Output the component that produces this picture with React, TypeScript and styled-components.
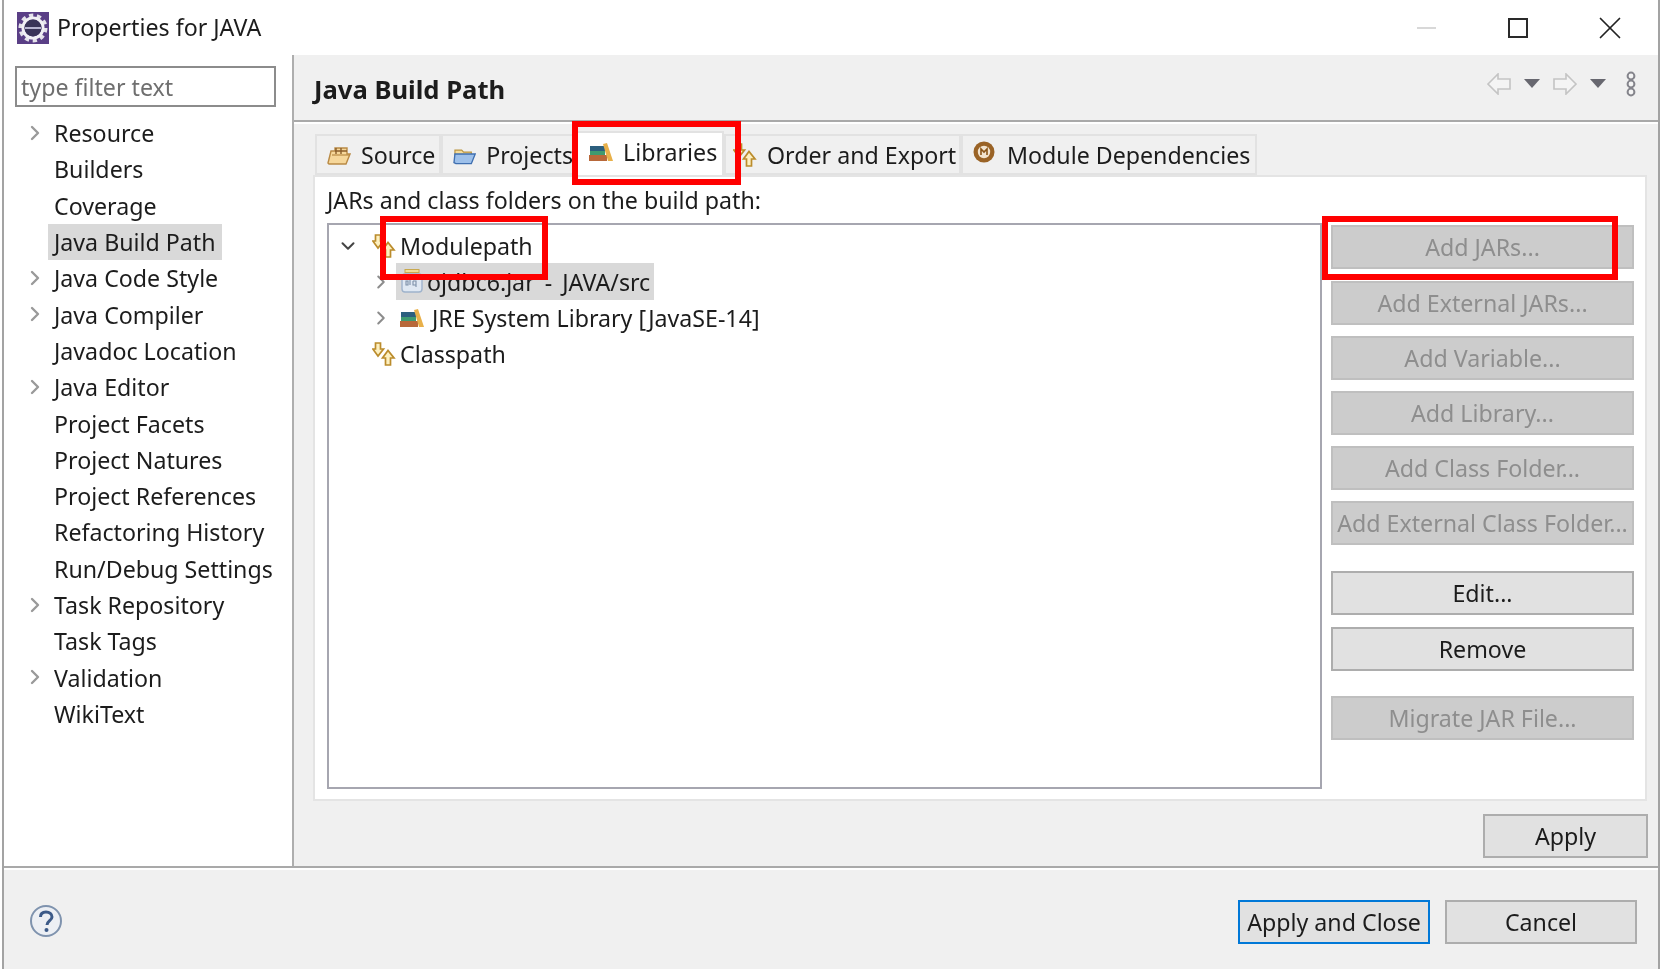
import React from 'react';
import styled, { createGlobalStyle } from 'styled-components';
import { ChevronRight, ChevronDown, X } from 'lucide-react';

const GlobalStyle = createGlobalStyle`
  html, body { margin: 0; padding: 0; background: #fff; }
  body { font-family: "Noto Sans", "Open Sans", sans-serif; color: #1c1c1c; }
  * { box-sizing: border-box; }
`;

const Page = styled.div`
  position: relative;
  width: 1664px;
  height: 969px;
  padding: 0 4px 0 2px;
  overflow: hidden;
  font-size: 23.2px;
`;

const Window = styled.div`
  width: 100%;
  height: 100%;
  display: flex;
  flex-direction: column;
  border-left: 2px solid #a3a3a3;
  border-right: 2px solid #a3a3a3;
  background: #fff;
  filter: blur(0.4px);
`;

const TitleBar = styled.div`
  height: 55px;
  flex: none;
  display: flex;
  align-items: center;
  padding: 0 6px 0 13px;
  gap: 8px;
`;

const TitleText = styled.span`
  flex: 1;
  line-height: 1;
`;

const WinButton = styled.div`
  width: 84px;
  display: flex;
  justify-content: center;
  align-items: center;
`;

const Minimize = styled.div`
  width: 19px;
  height: 2px;
  background: #d8d8d8;
`;

const Maximize = styled.div`
  width: 20px;
  height: 20px;
  border: 2px solid #2a2a2a;
`;

const Body = styled.div`
  height: 813px;
  flex: none;
  display: flex;
  border-bottom: 2px solid #a9a9a9;
`;

const Sidebar = styled.aside`
  width: 290px;
  flex: none;
  padding: 11px 0 0 11px;
  border-right: 2px solid #aeaeae;
`;

const Filter = styled.div`
  width: 261px;
  height: 41px;
  border: 2px solid #8c8c8c;
  padding-left: 4px;
  display: flex;
  align-items: center;
  color: #6f6f6f;
  margin-bottom: 8px;
`;

const NavRow = styled.div`
  height: 36.3px;
  display: flex;
  align-items: center;
  position: relative;
  padding-left: 39px;
  white-space: nowrap;
`;

const NavChevron = styled(ChevronRight)`
  position: absolute;
  left: 8px;
  top: 6px;
  color: #9a9a9a;
`;

const NavLabel = styled.span<{ $selected?: boolean }>`
  display: flex;
  align-items: center;
  height: 36px;
  margin-left: -6px;
  padding: 0 6px;
  background: ${p => (p.$selected ? '#d9d9d9' : 'transparent')};
`;

const Main = styled.main`
  flex: 1;
  min-width: 0;
  background: #f0f0f0;
  display: flex;
  flex-direction: column;
`;

const Header = styled.div`
  height: 67px;
  flex: none;
  display: flex;
  align-items: center;
  justify-content: space-between;
  padding: 4px 22px 0 20px;
  border-bottom: 2px solid #a9a9a9;
  box-shadow: 0 2px 0 #fff;
`;

const HeaderTitle = styled.h1`
  margin: 0;
  font-size: 25.6px;
  font-weight: 700;
`;

const NavTools = styled.div`
  display: flex;
  align-items: center;
  gap: 13px;
  margin-top: -12px;
`;

const MenuSlot = styled.div`
  display: flex;
  margin-left: 7px;
`;

const TabStrip = styled.div`
  margin: 12px 0 0 21px;
  height: 41px;
  flex: none;
  display: flex;
  align-items: flex-start;
`;

const Tab = styled.div<{ $w: number; $active?: boolean; $pad?: number }>`
  width: ${p => p.$w}px;
  height: ${p => (p.$active ? '44px' : '41px')};
  margin-top: ${p => (p.$active ? '-3px' : '0')};
  padding-bottom: ${p => (p.$active ? '4px' : '0')};
  position: relative;
  z-index: ${p => (p.$active ? 1 : 0)};
  display: flex;
  align-items: center;
  gap: 10px;
  padding-left: ${p => p.$pad ?? 10}px;
  background: ${p => (p.$active ? '#fff' : '#f0f0f0')};
  border: 2px solid #e2e2e2;
  border-bottom: ${p => (p.$active ? 'none' : '2px solid #e2e2e2')};
  white-space: nowrap;
`;

const Panel = styled.div`
  margin: 0 11px 0 19px;
  height: 626px;
  flex: none;
  background: #fff;
  border: 2px solid #e4e4e4;
  padding: 9px 12px 10px 12px;
  display: flex;
  flex-direction: column;
`;

const PanelLabel = styled.div`
  height: 37.4px;
  padding-bottom: 10px;
  display: flex;
  align-items: center;
  flex: none;
`;

const PanelColumns = styled.div`
  flex: 1;
  display: flex;
  gap: 9px;
  min-height: 0;
`;

const Tree = styled.div`
  width: 995px;
  height: 566px;
  flex: none;
  border: 2px solid #a6a6b0;
  padding-top: 2px;
`;

const TreeRow = styled.div<{ $depth: number }>`
  height: 36.3px;
  display: flex;
  align-items: center;
  padding-left: ${p => 7 + p.$depth * 33}px;
  white-space: nowrap;
`;

const Twist = styled.span`
  width: 24px;
  height: 24px;
  flex: none;
  display: flex;
  align-items: center;
  justify-content: center;
  color: #8c8c8c;
`;

const TwistOpen = styled(Twist)`
  color: #444;
`;

const TreeIcon = styled.span<{ $ml: number }>`
  width: 24px;
  height: 24px;
  flex: none;
  display: flex;
  align-items: center;
  margin-left: ${p => p.$ml}px;
`;

const TreeText = styled.span<{ $ml: number }>`
  margin-left: ${p => p.$ml}px;
  line-height: 36px;
`;

const JarText = styled(TreeText)`
  word-spacing: 4px;
`;

const SelectedBand = styled.span`
  display: flex;
  align-items: center;
  height: 37px;
  margin-left: 3px;
  padding-right: 4px;
  background: #d9d9d9;
`;

const ButtonColumn = styled.div`
  width: 303px;
  flex: none;
  display: flex;
  flex-direction: column;
  margin-top: 2px;
`;

const PushButton = styled.div<{ $disabled?: boolean; $top?: number; $focused?: boolean }>`
  height: 44px;
  flex: none;
  margin-top: ${p => p.$top ?? 11.2}px;
  display: flex;
  align-items: center;
  justify-content: center;
  background: ${p => (p.$disabled ? '#cccccc' : '#e1e1e1')};
  color: ${p => (p.$disabled ? '#8e8e8e' : '#1c1c1c')};
  border: 2px solid ${p => (p.$focused ? '#0078d7' : p.$disabled ? '#bfbfbf' : '#adadad')};
  white-space: nowrap;
`;

const ApplyRow = styled.div`
  display: flex;
  justify-content: flex-end;
  padding: 13px 10px 0 0;
`;

const SizedButton = styled(PushButton)<{ $w: number }>`
  width: ${p => p.$w}px;
  margin-top: 0;
`;

const Footer = styled.div`
  flex: 1;
  background: #f0f0f0;
  display: flex;
  align-items: center;
  justify-content: space-between;
  padding: 0 21px 0 25px;
  box-shadow: inset 0 2px 0 #fff;
`;

const HelpSlot = styled.div`
  display: flex;
  margin-top: 4px;
`;

const FooterButtons = styled.div`
  display: flex;
  gap: 15px;
  margin-top: 6px;
`;

const RedFrame = styled.div<{ $x: number; $y: number; $w: number; $h: number }>`
  position: absolute;
  left: ${p => p.$x}px;
  top: ${p => p.$y}px;
  width: ${p => p.$w}px;
  height: ${p => p.$h}px;
  border: 6px solid #ff0000;
  z-index: 5;
`;

const AppIcon = () => (
  <svg width="32" height="32" viewBox="0 0 32 32">
    <rect width="32" height="32" fill="#5a3f86" />
    <circle cx="16" cy="16" r="12.5" fill="none" stroke="#e4e2ea" strokeWidth="4" strokeDasharray="4.2 3.6" />
    <circle cx="16" cy="16" r="10" fill="none" stroke="#f1f0f4" strokeWidth="3" />
    <circle cx="16" cy="16" r="8.5" fill="#3a3458" />
    <rect x="8" y="15" width="16" height="2" fill="#b7b3d0" />
  </svg>
);

const LibraryIcon = () => (
  <svg width="24" height="20" viewBox="0 0 24 20">
    <rect x="1" y="4" width="15" height="5" fill="#2c5f7e" />
    <rect x="1" y="9" width="15" height="4" fill="#3f9a70" />
    <rect x="0" y="13" width="18" height="6" fill="#b8683a" />
    <path d="M14 2 L18 1 L24 19 L19 19 Z" fill="#e8b04a" />
  </svg>
);

const SourceIcon = () => (
  <svg width="24" height="24" viewBox="0 0 24 24">
    <path d="M1 20 L4 8 L8 8 L8 5 L20 5 L20 11 L23 11 L19 21 L2 21 Z" fill="#f6d79a" stroke="#b98a45" strokeWidth="1.4" />
    <path d="M9 5 V11 M14 5 V11 M8 8 H20" stroke="#8a5e2a" strokeWidth="1.4" />
    <path d="M5 12 H22" stroke="#b98a45" strokeWidth="1.2" />
  </svg>
);

const FolderIcon = () => (
  <svg width="24" height="24" viewBox="0 0 24 24">
    <path d="M2 7 L9 7 L11 9 L19 9 L19 12 L2 12 Z" fill="#f5dc9a" stroke="#b9933f" strokeWidth="1.2" />
    <path d="M1 20 L2 11 L23 11 L19 21 L3 21 Z" fill="#9dc0ea" stroke="#3f6fb0" strokeWidth="1.4" />
  </svg>
);

const OrderIcon = () => (
  <svg width="24" height="24" viewBox="0 0 24 24">
    <path d="M3.5 1 H8.5 V7 H11.5 L6 14 L0.8 7 H3.5 Z" fill="#fdf0c0" stroke="#bb8c2c" strokeWidth="1.7" />
    <path d="M13.5 23 H18.5 V16 H22 L16 8.5 L10.5 16 H13.5 Z" fill="#fdf0c0" stroke="#bb8c2c" strokeWidth="1.7" />
  </svg>
);

const ModuleIcon = () => (
  <svg width="24" height="24" viewBox="0 0 24 24" style={{ marginTop: -6 }}>
    <circle cx="11" cy="12" r="10.5" fill="#9a6326" />
    <circle cx="11" cy="12" r="6.2" fill="#f2e4cf" />
    <path d="M8 15 V9 L11 12 L14 9 V15" fill="none" stroke="#8a5518" strokeWidth="1.6" />
  </svg>
);

const JarIcon = () => (
  <svg width="24" height="24" viewBox="0 0 24 24" style={{ marginTop: -2 }}>
    <rect x="4" y="0.5" width="14" height="3" fill="#f1dd98" stroke="#c9a94e" />
    <rect x="1" y="5" width="20" height="18" rx="3" fill="#dfe8f3" stroke="#9fb3cc" strokeWidth="1.4" />
    <path d="M5 12 h2 v4 h-2 z M9 11 v5 M12 12 h3 v6 M12 12 v4 h3" fill="none" stroke="#7c8fa8" strokeWidth="1.1" />
  </svg>
);

const HelpIcon = () => (
  <svg width="34" height="34" viewBox="0 0 34 34">
    <circle cx="17" cy="17" r="15" fill="#eceff4" stroke="#7f93ae" strokeWidth="2" />
    <path d="M11.5 13 C11.5 9.5 14 8 17 8 C20.5 8 23 10 23 13 C23 16.5 18 17 18 21" fill="none" stroke="#3c5a88" strokeWidth="3" />
    <circle cx="17.5" cy="26" r="2" fill="#3c5a88" />
  </svg>
);

const BackArrow = ({ flip }: { flip?: boolean }) => (
  <svg width="24" height="22" viewBox="0 0 24 22" style={flip ? { transform: 'scaleX(-1)' } : undefined}>
    <path d="M1 11 L11 1 V6 H23 V16 H11 V21 Z" fill="#f4f4f4" stroke="#c4c4c4" strokeWidth="1.6" />
  </svg>
);

const DropArrow = () => (
  <svg width="16" height="10" viewBox="0 0 16 10">
    <path d="M0 0 H16 L8 9 Z" fill="#67676f" />
  </svg>
);

const ViewMenu = () => (
  <svg width="10" height="26" viewBox="0 0 10 26">
    <g fill="#f4f4f4" stroke="#85858c" strokeWidth="2">
      <circle cx="5" cy="5" r="3.4" />
      <circle cx="5" cy="13" r="3.4" />
      <circle cx="5" cy="21" r="3.4" />
    </g>
  </svg>
);

const navItems: { label: string; arrow?: boolean; selected?: boolean }[] = [
  { label: 'Resource', arrow: true },
  { label: 'Builders' },
  { label: 'Coverage' },
  { label: 'Java Build Path', selected: true },
  { label: 'Java Code Style', arrow: true },
  { label: 'Java Compiler', arrow: true },
  { label: 'Javadoc Location' },
  { label: 'Java Editor', arrow: true },
  { label: 'Project Facets' },
  { label: 'Project Natures' },
  { label: 'Project References' },
  { label: 'Refactoring History' },
  { label: 'Run/Debug Settings' },
  { label: 'Task Repository', arrow: true },
  { label: 'Task Tags' },
  { label: 'Validation', arrow: true },
  { label: 'WikiText' },
];

const App: React.FC = () => (
  <>
    <GlobalStyle />
    <Page>
      <Window>
        <TitleBar>
          <AppIcon />
          <TitleText>Properties for JAVA</TitleText>
          <WinButton><Minimize /></WinButton>
          <WinButton><Maximize /></WinButton>
          <WinButton><X size={38} strokeWidth={1.1} color="#222" /></WinButton>
        </TitleBar>
        <Body>
          <Sidebar>
            <Filter>type filter text</Filter>
            {navItems.map(item => (
              <NavRow key={item.label}>
                {item.arrow && <NavChevron size={24} strokeWidth={2.4} />}
                <NavLabel $selected={item.selected}>{item.label}</NavLabel>
              </NavRow>
            ))}
          </Sidebar>
          <Main>
            <Header>
              <HeaderTitle>Java Build Path</HeaderTitle>
              <NavTools>
                <BackArrow />
                <DropArrow />
                <BackArrow flip />
                <DropArrow />
                <MenuSlot><ViewMenu /></MenuSlot>
              </NavTools>
            </Header>
            <TabStrip>
              <Tab $w={126}><SourceIcon />Source</Tab>
              <Tab $w={134}><FolderIcon />Projects</Tab>
              <Tab $w={149} $active $pad={12}><LibraryIcon />Libraries</Tab>
              <Tab $w={237} $pad={7}><OrderIcon />Order and Export</Tab>
              <Tab $w={296}><ModuleIcon />Module Dependencies</Tab>
            </TabStrip>
            <Panel>
              <PanelLabel>JARs and class folders on the build path:</PanelLabel>
              <PanelColumns>
                <Tree>
                  <TreeRow $depth={0}>
                    <TwistOpen><ChevronDown size={22} strokeWidth={2.2} /></TwistOpen>
                    <TreeIcon $ml={12}><OrderIcon /></TreeIcon>
                    <TreeText $ml={4}>Modulepath</TreeText>
                  </TreeRow>
                  <TreeRow $depth={1}>
                    <Twist><ChevronRight size={22} strokeWidth={2.2} /></Twist>
                    <SelectedBand>
                      <TreeIcon $ml={5}><JarIcon /></TreeIcon>
                      <JarText $ml={2}>ojdbc6.jar - JAVA/src</JarText>
                    </SelectedBand>
                  </TreeRow>
                  <TreeRow $depth={1}>
                    <Twist><ChevronRight size={22} strokeWidth={2.2} /></Twist>
                    <TreeIcon $ml={7}><LibraryIcon /></TreeIcon>
                    <TreeText $ml={8}>JRE System Library [JavaSE-14]</TreeText>
                  </TreeRow>
                  <TreeRow $depth={0}>
                    <Twist />
                    <TreeIcon $ml={12}><OrderIcon /></TreeIcon>
                    <TreeText $ml={4}>Classpath</TreeText>
                  </TreeRow>
                </Tree>
                <ButtonColumn>
                  <PushButton $disabled $top={0}>Add JARs...</PushButton>
                  <PushButton $disabled>Add External JARs...</PushButton>
                  <PushButton $disabled>Add Variable...</PushButton>
                  <PushButton $disabled>Add Library...</PushButton>
                  <PushButton $disabled>Add Class Folder...</PushButton>
                  <PushButton $disabled>Add External Class Folder...</PushButton>
                  <PushButton $top={26}>Edit...</PushButton>
                  <PushButton>Remove</PushButton>
                  <PushButton $disabled $top={25}>Migrate JAR File...</PushButton>
                </ButtonColumn>
              </PanelColumns>
            </Panel>
            <ApplyRow>
              <SizedButton $w={165}>Apply</SizedButton>
            </ApplyRow>
          </Main>
        </Body>
        <Footer>
          <HelpSlot><HelpIcon /></HelpSlot>
          <FooterButtons>
            <SizedButton $w={192} $focused>Apply and Close</SizedButton>
            <SizedButton $w={192}>Cancel</SizedButton>
          </FooterButtons>
        </Footer>
      </Window>
      <RedFrame $x={572} $y={121} $w={169} $h={64} />
      <RedFrame $x={380} $y={216} $w={168} $h={64} />
      <RedFrame $x={1322} $y={216} $w={296} $h={64} />
    </Page>
  </>
);

export default App;
